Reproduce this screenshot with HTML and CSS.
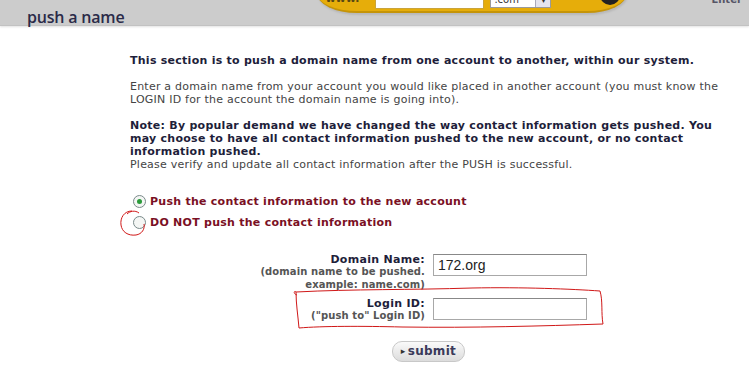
FILE: index.html
```html
<!DOCTYPE html>
<html lang="en">
<head>
    <meta charset="UTF-8">
    <title>push a name</title>
    <link rel="stylesheet" href="styles.css">
</head>
<body>
    <div class="topbar">
        <h1 class="title">push a name</h1>
        <div class="search">
            <span class="www">www.</span>
            <span class="search-input"></span>
            <span class="tld">.com<span class="tld-arrow">&#9662;</span></span>
            <span class="go"></span>
        </div>
        <span class="enter">Enter</span>
    </div>

    <div class="content">
        <p class="lead">This section is to push a domain name from one account to another, within our system.</p>
        <p class="info">Enter a domain name from your account you would like placed in another account (you must know the LOGIN ID for the account the domain name is going into).</p>
        <p class="info"><b>Note: By popular demand we have changed the way contact information gets pushed. You may choose to have all contact information pushed to the new account, or no contact information pushed.</b><br>Please verify and update all contact information after the PUSH is successful.</p>

        <div class="choices">
            <label class="choice"><span class="radio checked"></span>Push the contact information to the new account</label>
            <label class="choice"><span class="radio"></span>DO NOT push the contact information</label>
        </div>

        <div class="form">
            <div class="label">Domain Name:<small>(domain name to be pushed.<br>example: name.com)</small></div>
            <div class="field"><span class="textbox">172.org</span></div>
            <div class="label">Login ID:<small>("push to" Login ID)</small></div>
            <div class="field"><span class="textbox"></span></div>
        </div>

        <div class="actions">
            <button class="submit"><span class="arrow">&#9656;</span>submit</button>
        </div>
    </div>

    <!-- hand-drawn red marks -->
    <svg class="mark mark-circle" width="32" height="30" viewBox="0 0 32 30">
        <path d="M14 3 C6 3 2 10 3 17 C4 24 10 28 18 27 C24 26 27 21 26 16" fill="none" stroke="#d01818" stroke-width="1"/>
        <path d="M9 6 C12 3 17 2 21 5" fill="none" stroke="#d01818" stroke-width="1"/>
    </svg>
    <svg class="mark mark-box" width="316" height="44" viewBox="0 0 316 44">
        <path d="M4 6 C60 3 120 4 180 2 C230 1 280 3 308 5 C311 15 309 27 311 38 C250 40 180 42 110 41 C70 40 30 40 7 42 C6 30 4 18 4 6 Z" fill="none" stroke="#d01818" stroke-width="1"/>
        <path d="M4 6 C2 4 1 8 5 9" fill="none" stroke="#d01818" stroke-width="1"/>
    </svg>
</body>
</html>
```

FILE: styles.css
```css
body {
    margin: 0;
    background: #fff;
    font-family: "DejaVu Sans", Verdana, sans-serif;
    font-size: 11px;
    color: #444;
    position: relative;
    overflow: hidden;
}
.topbar {
    height: 25px;
    background: #cccccc;
    border-bottom: 1px solid #c2c2c2;
    box-shadow: 0 1px 2px #e2e2e2;
    display: flex;
    align-items: flex-start;
}
.title {
    margin: 7px 0 0 27px;
    font-family: "Open Sans", "DejaVu Sans", sans-serif;
    font-size: 16px;
    line-height: 20px;
    font-weight: 600;
    color: #2a2a48;
    letter-spacing: -0.2px;
}
.search {
    margin: -14px 0 0 193px;
    width: 310px;
    height: 27px;
    background: #e6ad0a;
    border-bottom: 2px solid #c59408;
    border-radius: 0 0 40px 40px / 0 0 20px 20px;
    display: flex;
    align-items: flex-start;
    padding-top: 12px;
    box-sizing: border-box;
    box-shadow: 1px 2px 2px #b8b8b8;
}
.www {
    margin: -6px 0 0 8px;
    width: 50px;
    font-size: 11px;
    font-weight: bold;
    color: #5a4a10;
}
.search-input {
    width: 107px;
    height: 10px;
    background: #fff;
    border: 1px solid #caa43a;
    border-top: none;
}
.tld {
    margin-left: 6px;
    width: 61px;
    height: 10px;
    background: #fff;
    border: 1px solid #9a9a9a;
    border-top: none;
    display: flex;
    justify-content: space-between;
    font-size: 10px;
    line-height: 4px;
    color: #333;
    padding-left: 3px;
    box-sizing: border-box;
}
.tld-arrow {
    width: 14px;
    background: #e4e4ee;
    border-left: 1px solid #aab;
    text-align: center;
    font-size: 9px;
}
.go {
    margin: -4px 0 0 49px;
    width: 20px;
    height: 11px;
    background: #222;
    border-radius: 0 0 10px 10px;
}
.enter {
    margin: -6px 0 0 84px;
    font-size: 10px;
    color: #556;
    font-weight: bold;
}
.content {
    width: 592px;
    margin: 28px 0 0 130px;
    letter-spacing: 0.22px;
}
.content p {
    margin: 0 0 13px;
    line-height: 13px;
}
.lead {
    font-weight: bold;
    color: #1e1e3a;
    letter-spacing: 0.26px;
}
.info b {
    color: #1e1e3a;
    letter-spacing: 0.26px;
}
.choices {
    margin-top: 24px;
    display: flex;
    flex-direction: column;
    gap: 8px;
}
.choice {
    display: flex;
    align-items: center;
    gap: 4px;
    font-weight: bold;
    color: #7a1024;
    line-height: 13px;
    letter-spacing: 0.26px;
}
.radio {
    margin-left: 3px;
    width: 11px;
    height: 11px;
    border: 1px solid #7a8a8a;
    border-radius: 50%;
    background: #f4f6f4;
    box-sizing: content-box;
    display: flex;
    align-items: center;
    justify-content: center;
}
.radio.checked::after {
    content: "";
    width: 5px;
    height: 5px;
    border-radius: 50%;
    background: #2a9a3a;
}
.form {
    margin-top: 24px;
    display: grid;
    grid-template-columns: 295px 154px;
    column-gap: 8px;
    row-gap: 6px;
}
.label {
    text-align: right;
    font-weight: bold;
    color: #1e1e3a;
    line-height: 13px;
    letter-spacing: 0.3px;
}
.label small {
    display: block;
    font-size: 10px;
    line-height: 12.5px;
    color: #555;
    letter-spacing: 0.1px;
}
.field {
    padding-top: 1px;
}
.textbox {
    display: block;
    height: 20px;
    border: 1px solid #a8a8a8;
    border-top-color: #888;
    background: #fff;
    font-family: "Liberation Sans", Arial, sans-serif;
    font-size: 14px;
    line-height: 20px;
    color: #222;
    padding-left: 4px;
    letter-spacing: 0;
}
.actions {
    margin-top: 18px;
    padding-left: 262px;
}
.submit {
    width: 73px;
    height: 21px;
    border: 1px solid #c8c8c8;
    border-radius: 10px;
    background: linear-gradient(#fafafa, #dcdcdc);
    font-family: "DejaVu Sans", Verdana, sans-serif;
    font-size: 12px;
    font-weight: bold;
    color: #3a3a5a;
    padding: 0;
    display: flex;
    align-items: center;
    justify-content: center;
    gap: 2px;
    letter-spacing: 0.3px;
}
.submit .arrow {
    font-size: 9px;
    color: #333;
}
.mark {
    position: absolute;
}
.mark-circle {
    left: 118px;
    top: 208px;
}
.mark-box {
    left: 292px;
    top: 286px;
}
```
